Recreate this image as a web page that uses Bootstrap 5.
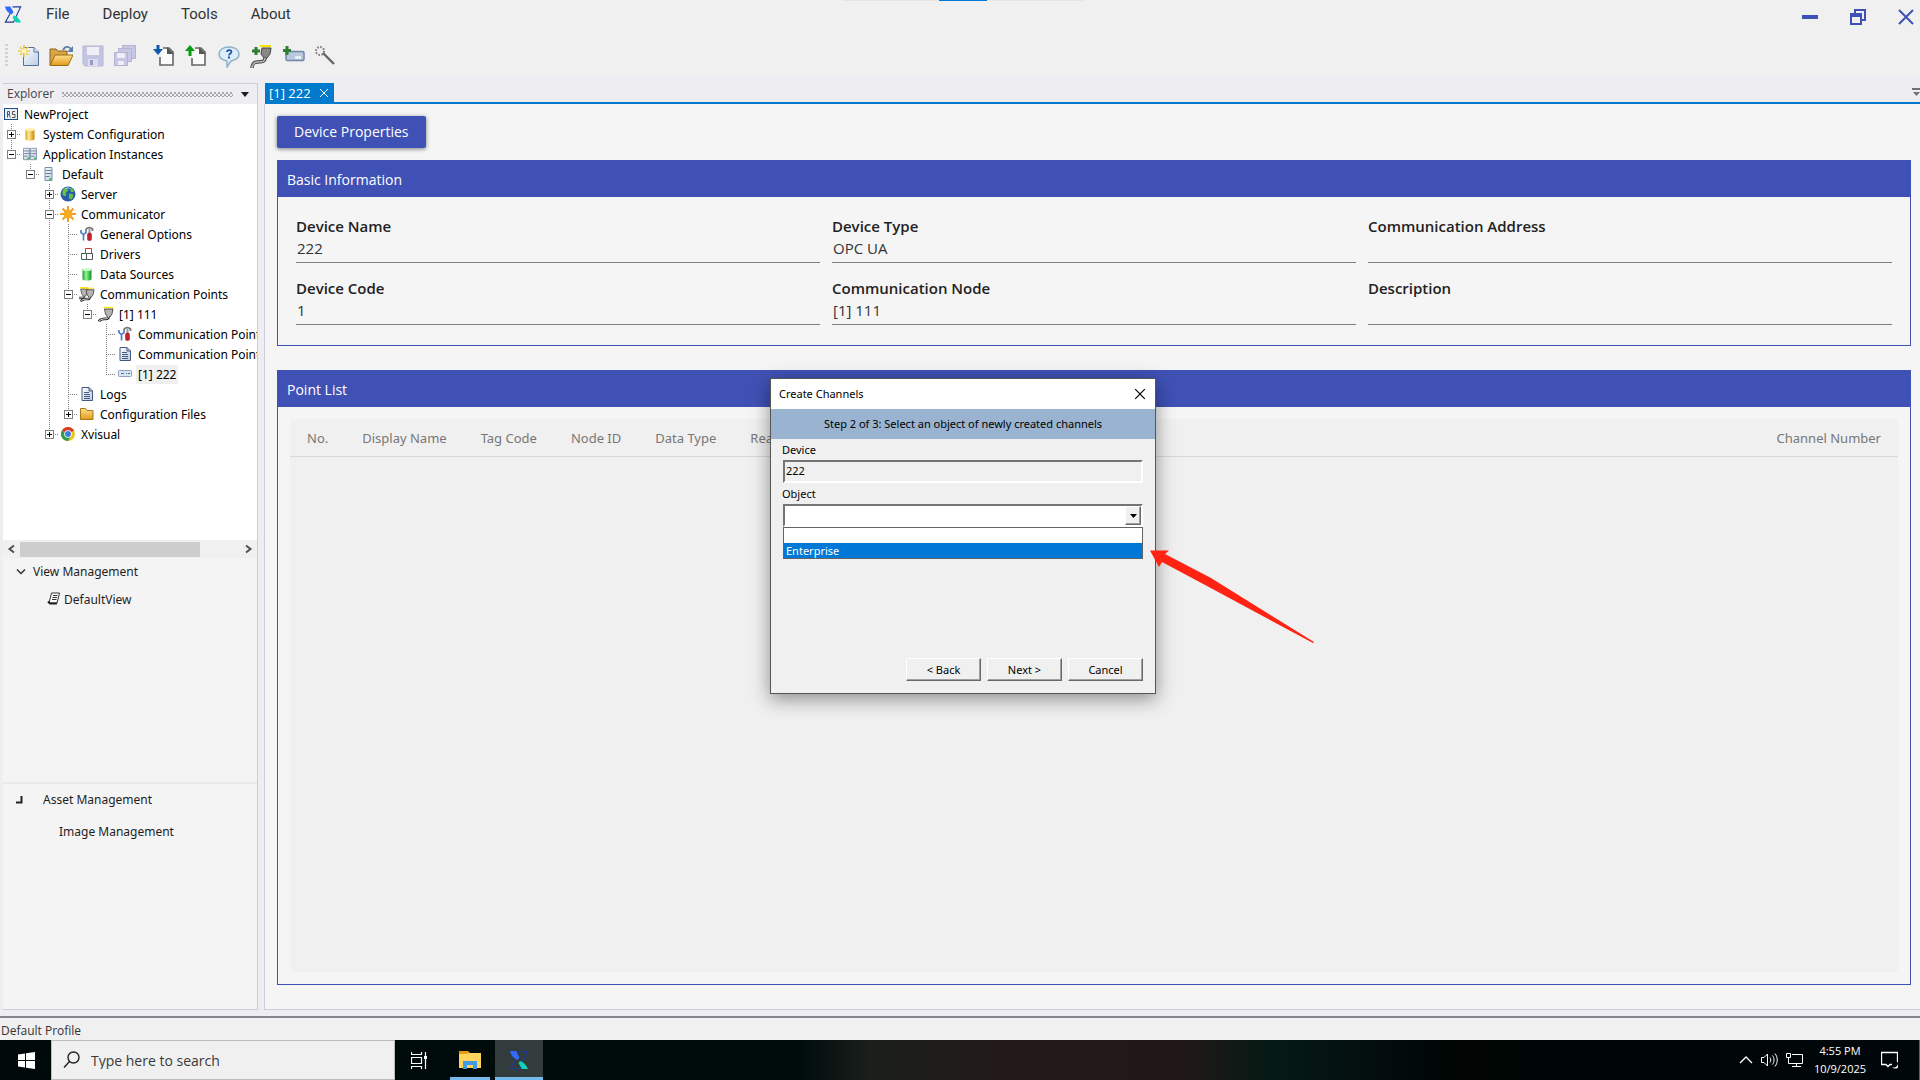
<!DOCTYPE html>
<html lang="en">
<head>
<meta charset="utf-8">
<meta name="viewport" content="width=device-width, initial-scale=1">
<title>NewProject - Explorer</title>
<link href="https://cdn.jsdelivr.net/npm/bootstrap@5.3.0/dist/css/bootstrap.min.css" rel="stylesheet">
<style>
:root{--indigo:#3f51b5;--tab:#007acc;--dock:#eeeef2;--edge:#ccccdd;--ui:"Open Sans","Noto Sans",sans-serif}
body{font-family:var(--ui);font-size:12px;line-height:16px;color:#1e1e1e;background:#f0f0f0}
svg{display:block;flex:none}
button,input,select{font-family:inherit}
.app-shell{min-height:100vh}
.notch{width:241px;height:1px;left:843px;background:linear-gradient(90deg,#e5e5e5 96px,#0078d7 96px,#0078d7 144px,#e5e5e5 144px)}
.menu-bar{height:28px;padding-left:4px}
.menu-bar nav{gap:33px;margin-left:24px}
.menu-bar nav a{font:15px/20px Roboto,sans-serif;color:#333;text-decoration:none}
.caption-btns{gap:32px;padding:6px 6px 0 0}
.plain{background:none;border:0;padding:0;color:inherit}
.tool-bar{height:49px;padding:7px 0 0 5px;gap:8px}
.grip{width:3px;height:24px;margin-right:1px;background:repeating-linear-gradient(180deg,#d0d0d0 0 2px,transparent 2px 4px)}
.dock{background:var(--dock);padding-top:6px;padding-left:3px;gap:6px;min-height:0}
.side{width:255px;border:1px solid var(--edge);border-left:0;background:#f4f4f4;margin-bottom:6px}
.side-head{height:20px;background:var(--dock);padding:0 8px 0 4px;color:#444;gap:8px}
.dots{height:5px;background-image:radial-gradient(circle at 1px 1px,#a5a5ab 0 .7px,transparent 1px),radial-gradient(circle at 1px 1px,#a5a5ab 0 .7px,transparent 1px);background-size:4px 4px;background-position:0 0,2px 2px}
.tree{height:436px;background:#fff;overflow:hidden;font-family:"Noto Sans",sans-serif;color:#000}
.tree-row{display:flex;height:20px;align-items:center;white-space:nowrap}
.tree-row b{width:19px;height:20px;flex:none;position:relative;--d:repeating-linear-gradient(180deg,#808080 0 1px,transparent 1px 2px);--h:repeating-linear-gradient(90deg,#808080 0 1px,transparent 1px 2px);background-repeat:no-repeat}
.tree-row b.v{background-image:var(--d);background-size:1px 20px;background-position:8px 0}
.tree-row b.t{background-image:var(--d),var(--h);background-size:1px 20px,10px 1px;background-position:8px 0,8px 10px}
.tree-row b.l{background-image:var(--d),var(--h);background-size:1px 11px,10px 1px;background-position:8px 0,8px 10px}
.tree-row b.x::before{content:"";position:absolute;left:4px;top:6px;width:9px;height:9px;border:1px solid #808080;background:linear-gradient(#000,#000) 1px 3px/5px 1px no-repeat #fff}
.tree-row b.p::before{background:linear-gradient(#000,#000) 1px 3px/5px 1px no-repeat,linear-gradient(#000,#000) 3px 1px/1px 5px no-repeat,#fff}
.tree-row span{margin-left:3px;padding:0 2px;line-height:19px}
.tree-row .picked{background:#f0f0f0}
.h-scroll{height:18px;background:#f0f0f0}
.h-thumb{width:180px;height:15px;background:#cdcdcd}
.views{height:226px;border-bottom:2px solid #e8e8e8;font-family:"Noto Sans",sans-serif}
.view-root{padding:4px 0 0 13px}
.view-leaf{padding:8px 0 0 44px}
.assets{font-family:"Noto Sans",sans-serif}
.tab-strip{height:21px;border-bottom:2px solid var(--tab);margin-left:1px}
.doc-tab{background:var(--tab);color:#fff;width:69px;padding:0 5px 0 4px;font-size:13px;height:19px}
.doc{background:#f5f5f5;border:1px solid var(--edge);border-top:0;border-right:0;margin-bottom:6px;padding:12px 9px 24px 12px}
.btn-props{background:var(--indigo);color:#fff;font-size:14px;line-height:20px;height:32px;padding:0 17px;border:0;border-radius:2px;box-shadow:0 1px 4px rgba(0,0,0,.5)}
.btn-props:hover{background:#35459c;color:#fff}
.panel{border:1px solid var(--indigo)}
.info-panel{margin:12px 0 24px}
.panel-head{background:var(--indigo);color:#fff;height:36px;padding:0 9px;font-size:14px;line-height:37px;margin:0;font-weight:400}
.info-grid{padding:19px 12px 20px;--bs-gutter-x:12px;row-gap:15px}
.info-grid label{display:block;font-size:15px;line-height:21px;font-weight:600;color:#222}
.info-grid input{display:block;width:100%;border:0;border-bottom:1px solid #808080;background:none;font-size:15px;line-height:20px;height:26px;padding:0 1px 4px;color:#333;border-radius:0;outline:0}
.grid-wrap{background:#f0f0f0;border-radius:4px;margin:12px}
.grid-wrap table{width:100%}
.grid-wrap th{font-family:"Noto Sans",sans-serif;font-size:13px;line-height:20px;font-weight:400;color:#777;padding:9px 17px 8px;border-bottom:1px solid #d8d8d8;white-space:nowrap}
.status{border-top:2px solid #85858b;height:24px;padding-left:1px;line-height:25px;color:#333}
.task-bar{height:40px;color:#fff;border-right:1px solid #5a6262;background:linear-gradient(90deg,#00090a 0,#000c0b 800px,#1b1f1c 870px,#221a19 1000px,#1f1817 1190px,#051a15 1270px,#03110f 1350px,#000504 1450px,#00070a 100%)}
.search{width:344px;background:#f0f0f0;border:1px solid #bbb;padding-left:11px;gap:11px}
.search input{border:0;background:none;outline:0;font-size:14px;color:#333;width:280px;padding:1px 0 0}
.search input::placeholder{color:#3a3a3a;opacity:1}
.start{width:51px;padding-left:2px}
.task{width:48px;height:40px}
.opened{margin:0 1px 0 3px;background:linear-gradient(#76b9ed,#76b9ed) 4px 37px/40px 3px no-repeat}
.running{background:#333c3c;box-shadow:inset 0 -3px #76b9ed}
.clock{font-size:11px;line-height:18px;width:58px;text-align:center}
.tray{padding-right:5px}
.wizard{left:770px;top:378px;width:386px;height:316px;background:#f0f0f0;border:1px solid #555;box-shadow:0 5px 18px rgba(0,0,0,.42);font-family:"Noto Sans",sans-serif;font-size:11px;color:#000}
.wiz-title{height:30px;background:#fff;padding:0 9px 0 8px}
.wiz-step{height:30px;background:#99b3d0;line-height:29px}
.wiz-body{padding:3px 12px 12px}
.wiz-body label{line-height:16px;display:block;margin:0 0 2px -1px}
.wiz-body .next-label{margin-top:3px}
.sunk{display:block;width:100%;height:23px;background:#f0f0f0;border:2px solid;border-color:#757575 #fff #fff #757575;padding:0 2px 3px 1px;border-radius:0;font-size:11px;line-height:16px;outline:0;color:#000}
select.sunk{appearance:none;background:#fff}
.drop{right:2px;top:2px;width:16px;height:19px;background:#f0f0f0;border:1px solid;border-color:#fff #696969 #696969 #fff;box-shadow:inset -1px -1px #a0a0a0;pointer-events:none}
.choices{top:23px;left:0;right:0;border:1px solid #646464;background:#fff;margin:0;padding:0;list-style:none}
.choices li{height:15px;line-height:15px;padding-left:2px}
.choices .on{background:#0078d7;color:#fff}
.wiz-foot{gap:6px}
.btn-raised{width:75px;height:23px;background:#f0f0f0;border:1px solid;border-color:#fff #696969 #696969 #fff;box-shadow:inset -1px -1px #a0a0a0;padding:0;color:#000}
.pointer{left:1148px;top:548px}
</style>
</head>
<body>
<svg width="0" height="0" class="position-absolute" aria-hidden="true">
 <defs>
  <linearGradient id="paper" x1="0" y1="0" x2="1" y2="1"><stop offset="0" stop-color="#fff"/><stop offset="1" stop-color="#b9cce4"/></linearGradient>
  <linearGradient id="gold" x1="0" y1="0" x2="0" y2="1"><stop offset="0" stop-color="#ffe08a"/><stop offset="1" stop-color="#e29a1c"/></linearGradient>
  <linearGradient id="goldh"><stop offset="0" stop-color="#d9a017"/><stop offset=".35" stop-color="#ffe98e"/><stop offset="1" stop-color="#c98a08"/></linearGradient>
  <linearGradient id="greenh"><stop offset="0" stop-color="#1f9a2e"/><stop offset=".4" stop-color="#8dfa92"/><stop offset="1" stop-color="#128a20"/></linearGradient>
  <symbol id="brand" viewBox="0 0 20 20"><path d="M9.500 1.500h9L10.500 18.500H1.500L9 5" fill="none" stroke="#1b3a9a" stroke-width="1.200"/><path d="M1 1h6l3.500 6.500-2 2.500C4 8 2 5 1 1z" fill="#2f6bff"/><path d="M11 11c4 1 6 4 8 8h-6L9.500 13z" fill="#10d3b4"/></symbol>
  <symbol id="page" viewBox="0 0 16 16"><path d="M3 1.500h7l3.500 3.500v9.500H3z" fill="url(#paper)" stroke="#44597c"/><path d="M10 1.500V5h3.500M5 6.500h5M5 8.500h6M5 10.500h6M5 12.500h6" stroke="#44597c" fill="none"/></symbol>
  <symbol id="tower" viewBox="0 0 8 16"><path d="M.5 1.500h7v13h-7z" fill="url(#paper)" stroke="#7d8ea5"/><path d="M1 4.500h6M1 7.500h6M1 10.500h4" stroke="#6b7d95"/><path d="M5 12h2v2H5z" fill="#2ec73a"/></symbol>
  <symbol id="tools" viewBox="0 0 16 16"><path d="M2 4v2.500L4.500 8.500 7 6.500V4M4.500 8v6.500" fill="none" stroke="#4a77c4" stroke-width="1.600"/><path d="M6.500 4c2-3 5-3 7-1v2" fill="none" stroke="#777" stroke-width="1.800"/><path d="M10.500 3v5" stroke="#999" stroke-width="2"/><rect x="8.500" y="7" width="4" height="7.500" rx="1.500" fill="#c5202e" stroke="#8d1420" stroke-width=".5"/></symbol>
  <symbol id="plug" viewBox="0 0 16 16"><path d="M6 1.500h9" stroke="#f4dc00" stroke-width="1.600" stroke-dasharray="1.500 .5"/><path d="M6.500 3h8.500l-1 5-2 3H9.500L7.500 8z" fill="#b5b5b5" stroke="#333" stroke-width=".8"/><path d="M10.500 10.500c0 3.500-3 2-5 2.500S2 13 1 15.500" fill="none" stroke="#222" stroke-width="2.600"/><path d="M10.500 10c0 3.500-3 2.500-5 3S2 13.500 1 15.500" fill="none" stroke="#e4e4e4" stroke-width="1"/></symbol>
  <symbol id="cross" viewBox="0 0 10 10"><path d="M1 1l8 8M9 1l-8 8" stroke="currentColor" stroke-width="1" fill="none"/></symbol>
 </defs>
</svg>

<div class="app-shell d-flex flex-column">
 <header>
  <div class="notch position-absolute"></div>
  <div class="menu-bar d-flex align-items-center">
   <svg width="18" height="19"><use href="#brand"/></svg>
   <nav class="d-flex flex-grow-1"><a href="#">File</a><a href="#">Deploy</a><a href="#">Tools</a><a href="#">About</a></nav>
   <div class="caption-btns d-flex align-items-center">
    <button class="plain" aria-label="Minimize"><svg width="16" height="16"><path d="M0 6h16v4H0z" fill="#3f51b5"/></svg></button>
    <button class="plain" aria-label="Restore"><svg width="16" height="16"><path d="M5 4V1h10v10h-4M1 5h10v10H1z" fill="none" stroke="#3f51b5" stroke-width="2"/><path d="M0 4h12v4H0z" fill="#3f51b5"/></svg></button>
    <button class="plain" aria-label="Close"><svg width="16" height="16"><path d="M1 1l14 14M15 1L1 15" stroke="#3f51b5" stroke-width="2"/></svg></button>
   </div>
  </div>
  <div class="tool-bar d-flex align-items-center" role="toolbar">
   <span class="grip"></span>
   <button class="plain" aria-label="New"><svg width="24" height="24"><path d="M6.500 3.500H17l4.500 4.500v13.500h-15z" fill="url(#paper)" stroke="#58719a"/><path d="M17 3.500V8h4.500" fill="#dfe8f5" stroke="#58719a"/><path d="M7 1v12M1 7h12M3 3l8 8M11 3l-8 8" stroke="#f1c84b" stroke-width="1.600"/><circle cx="7" cy="7" r="2.500" fill="#fff6b8"/></svg></button>
   <button class="plain" aria-label="Open"><svg width="24" height="24"><path d="M1 21V5h6l2 2h9v4" fill="#d9a546" stroke="#8a6420"/><path d="M1 21.500 6 11h18l-5 10.500z" fill="url(#gold)" stroke="#9b6a14"/><path d="M14 6c2-4 6-4 8-1" fill="none" stroke="#5d7ea8" stroke-width="1.800"/><path d="M24 2v6h-6z" fill="#5d7ea8"/></svg></button>
   <button class="plain" aria-label="Save"><svg width="24" height="24"><path d="M2 2h20v20H4l-2-2z" fill="#c3c3e2" stroke="#b5b5d8"/><path d="M6 3h12v8H6z" fill="#efeff8"/><path d="M7 15h10v7H7z" fill="#dcdcf0"/><path d="M9 16h3v5H9z" fill="#9999c7"/></svg></button>
   <button class="plain" aria-label="Save all"><svg width="24" height="24" fill="#c7c7e4" stroke="#b3b3d6"><path d="M9.500 1.500h13v13h-13z"/><path d="M5.500 4.500h13v13h-13z"/><path d="M1.500 8.500h13v13h-13z"/><path d="M4 9h8v5H4zM5 17h6v4H5z" fill="#eeeef8" stroke="none"/></svg></button>
   <button class="plain ms-2" aria-label="Import"><svg width="24" height="24"><path d="M10 4h6l4 4v13H7v-8" fill="#fafafa" stroke="#666" stroke-width="1.600"/><path d="M14 3l7 7h-7z" fill="#555"/><path d="M5 1v7" stroke="#1058a8" stroke-width="3"/><path d="M0 5h10l-5 6z" fill="#1058a8"/></svg></button>
   <button class="plain" aria-label="Export"><svg width="24" height="24"><path d="M10 4h6l4 4v13H7v-7" fill="#fafafa" stroke="#666" stroke-width="1.600"/><path d="M14 3l7 7h-7z" fill="#555"/><path d="M5 5v7" stroke="#0b9a12" stroke-width="3"/><path d="M0 7h10L5 1z" fill="#0b9a12"/></svg></button>
   <button class="plain" aria-label="Help"><svg width="24" height="24"><path d="M12 3c6 0 10 3 10 7s-3 6-8 7l-4 6v-6c-5-1-8-3-8-7s4-7 10-7z" fill="#dceefa" stroke="#8fb2c8" stroke-width="1.500"/><path d="M10 8c0-2.500 4.500-2.500 4.500 0 0 1.500-2.500 1.500-2.500 3.500" fill="none" stroke="#1b4db5" stroke-width="1.600"/><path d="M11 12.500h2v2h-2z" fill="#1b4db5"/></svg></button>
   <button class="plain" aria-label="Add point"><svg width="24" height="24"><path d="M11 2h11" stroke="#f4e400" stroke-width="2"/><path d="M13 4h9l-1 6-3 4h-3l-3-4z" fill="#888" stroke="#444"/><path d="M16 14c0 5-4 3-8 4-3 0-5 3-5 6" fill="none" stroke="#444" stroke-width="3.500"/><path d="M16 14c0 5-4 3-8 4-3 0-5 3-5 6" fill="none" stroke="#bbb" stroke-width="1.500"/><path d="M7 3v8M3 7h8" stroke="#2f7d32" stroke-width="3"/></svg></button>
   <button class="plain" aria-label="Add device"><svg width="24" height="24"><rect x="5" y="7.500" width="18" height="9" rx="1.500" fill="#b9c9e0" stroke="#7086ab" stroke-width="1.500"/><path d="M14 13.500h6" stroke="#fff" stroke-width="2"/><path d="M6 2v9M2 6.500h8" stroke="#2f7d32" stroke-width="3"/></svg></button>
   <button class="plain" aria-label="Wizard"><svg width="24" height="24"><path d="M10 9l11 11" stroke="#666" stroke-width="2.400"/><circle cx="7" cy="7" r="4" fill="none" stroke="#777" stroke-width="2" stroke-dasharray="1.600 1.500"/></svg></button>
  </div>
 </header>

 <div class="dock d-flex flex-grow-1">
  <aside class="side flex-shrink-0">
   <div class="side-head d-flex align-items-center"><span>Explorer</span><span class="dots flex-grow-1"></span><svg width="8" height="5"><path d="M0 0h8L4 5z" fill="#1e1e1e"/></svg></div>
   <div class="tree">
    <div class="tree-row"><svg width="16" height="16" viewBox="0 0 16 16"><rect x="1.500" y="2.500" width="13" height="11" fill="#e8eef5" stroke="#1a4f8a"/><path d="M4.500 11.500v-6h2v3h-2M6 9l1.500 2.500M12 5.500H9.500v3H12v3H9" fill="none" stroke="#555"/></svg><span>NewProject</span></div>
    <div class="tree-row"><b class="t x p"></b><svg width="16" height="16"><path d="M3.500 3h9v10c0 2-9 2-9 0z" fill="url(#goldh)"/><ellipse cx="8" cy="3.500" rx="4.500" ry="1.500" fill="#ffeeb0"/></svg><span>System Configuration</span></div>
    <div class="tree-row"><b class="l x"></b><svg width="16" height="16"><use href="#tower" x="1" y="1" width="7" height="14"/><use href="#tower" x="8" y="1" width="7" height="14"/></svg><span>Application Instances</span></div>
    <div class="tree-row"><b></b><b class="l x"></b><svg width="16" height="16"><use href="#tower" x="3" width="9" height="16"/></svg><span>Default</span></div>
    <div class="tree-row"><b></b><b></b><b class="t x p"></b><svg width="16" height="16"><circle cx="8" cy="8" r="7.500" fill="#2a5da8"/><path d="M3 4c2-3 5-2 5 0s-3 2-2 4-2 3-3 1-1-3 0-5zM9 8c3-1 5 0 4 3s-3 3-4 1zM10 2c2 0 4 2 4 4h-3z" fill="#66c04a"/><path d="M5 3c2-2 4-1 5 0" stroke="#bfe0ff" fill="none"/></svg><span>Server</span></div>
    <div class="tree-row"><b></b><b></b><b class="t x"></b><svg width="16" height="16"><path d="M8 0v16M0 8h16M2.500 2.500l11 11M13.500 2.500l-11 11" stroke="#f0a020" stroke-width="2"/><circle cx="8" cy="8" r="4.500" fill="#f7ab24"/></svg><span>Communicator</span></div>
    <div class="tree-row"><b></b><b></b><b class="v"></b><b class="t"></b><svg width="16" height="16"><use href="#tools"/></svg><span>General Options</span></div>
    <div class="tree-row"><b></b><b></b><b class="v"></b><b class="t"></b><svg width="16" height="16"><path d="M6.500 2.500h6v5h-6z" fill="#fff" stroke="#c33"/><path d="M2.500 7.500h5v6h-5z" fill="#fff" stroke="#2a7a35"/><path d="M7.500 7.500h6v6h-6z" fill="#fff" stroke="#555"/></svg><span>Drivers</span></div>
    <div class="tree-row"><b></b><b></b><b class="v"></b><b class="t"></b><svg width="16" height="16"><path d="M3.500 3h9v10c0 2-9 2-9 0z" fill="url(#greenh)"/><ellipse cx="8" cy="3.500" rx="4.500" ry="1.500" fill="#c8ffc8"/></svg><span>Data Sources</span></div>
    <div class="tree-row"><b></b><b></b><b class="v"></b><b class="t x"></b><svg width="16" height="16"><use href="#plug" x="-4" y="0" width="14" height="15"/><use href="#plug" x="1" y="1" width="15" height="15"/></svg><span>Communication Points</span></div>
    <div class="tree-row"><b></b><b></b><b class="v"></b><b class="v"></b><b class="l x"></b><svg width="16" height="16"><use href="#plug"/></svg><span>[1] 111</span></div>
    <div class="tree-row"><b></b><b></b><b class="v"></b><b class="v"></b><b></b><b class="t"></b><svg width="16" height="16"><use href="#tools"/></svg><span>Communication Point Properties</span></div>
    <div class="tree-row"><b></b><b></b><b class="v"></b><b class="v"></b><b></b><b class="t"></b><svg width="16" height="16"><use href="#page"/></svg><span>Communication Point Log</span></div>
    <div class="tree-row"><b></b><b></b><b class="v"></b><b class="v"></b><b></b><b class="l"></b><svg width="16" height="16"><rect x="1.500" y="4.500" width="13" height="6" rx="1" fill="#dbe4f1" stroke="#8fa1bd"/><path d="M4 7.500h3M9 7.500h1M11 7.500h2" stroke="#4c6fa5"/></svg><span class="picked">[1] 222</span></div>
    <div class="tree-row"><b></b><b></b><b class="v"></b><b class="t"></b><svg width="16" height="16"><use href="#page"/></svg><span>Logs</span></div>
    <div class="tree-row"><b></b><b></b><b class="v"></b><b class="l x p"></b><svg width="16" height="16"><path d="M1.500 13.500v-11h5l1.500 2h6v9z" fill="url(#gold)" stroke="#a87a1b"/></svg><span>Configuration Files</span></div>
    <div class="tree-row"><b></b><b></b><b class="l x p"></b><svg width="16" height="16"><circle cx="8" cy="8" r="7" fill="#f2c218"/><path d="M8 8 1.900 4.500A7 7 0 0 1 14.100 4.500z" fill="#d93a2b"/><path d="M8 8 1.900 4.500A7 7 0 0 0 8 15l3-5z" fill="#2f9d4c"/><circle cx="8" cy="8" r="3.800" fill="#fff"/><circle cx="8" cy="8" r="3" fill="#3f7fe0"/></svg><span>Xvisual</span></div>
   </div>
   <div class="h-scroll d-flex align-items-center">
    <svg width="17" height="10"><path d="M11 1.500 6.500 5l4.500 3.500" fill="none" stroke="#505050" stroke-width="2"/></svg><span class="h-thumb"></span>
    <svg class="ms-auto" width="17" height="10"><path d="M6 1.500 10.500 5 6 8.500" fill="none" stroke="#505050" stroke-width="2"/></svg>
   </div>
   <section class="views">
    <div class="view-root d-flex align-items-center"><svg width="17" height="20"><path d="M1 7.500l4 4 4-4" fill="none" stroke="#333" stroke-width="1.500"/></svg><span>View Management</span></div>
    <div class="view-leaf d-flex align-items-center"><svg width="17" height="20"><path d="M4.500 3h8l-2.500 10H2z" fill="#fff" stroke="#333"/><path d="M6 5.500h4.500M5.500 7.500H10M5 9.500h4.500" stroke="#333"/><path d="M1 11.500l2 2h7" stroke="#222" stroke-width="2" fill="none"/></svg><span>DefaultView</span></div>
   </section>
   <section class="assets">
    <div class="d-flex align-items-center pt-2 ps-2"><svg width="32" height="16"><path d="M5 10.500h5.500V4" fill="none" stroke="#222" stroke-width="2"/></svg><span>Asset Management</span></div>
    <div class="pt-3 ps-5"><div class="ps-2">Image Management</div></div>
   </section>
  </aside>

  <main class="flex-grow-1 d-flex flex-column">
   <div class="tab-strip d-flex justify-content-between">
    <div class="doc-tab d-flex align-items-center justify-content-between"><span>[1] 222</span><button class="plain" aria-label="Close tab"><svg width="10" height="10"><use href="#cross"/></svg></button></div>
    <svg width="8" height="10" class="mt-1"><path d="M0 1h8v2H0zM1 5h7L4.500 9z" fill="#717171"/></svg>
   </div>
   <div class="doc flex-grow-1 d-flex flex-column">
    <div class="d-flex"><button class="btn btn-props">Device Properties</button></div>
    <section class="panel info-panel">
     <h2 class="panel-head">Basic Information</h2>
     <form class="info-grid row mx-0">
      <div class="col-4"><label for="dname">Device Name</label><input id="dname" value="222" readonly></div>
      <div class="col-4"><label for="dtype">Device Type</label><input id="dtype" value="OPC UA" readonly></div>
      <div class="col-4"><label for="caddr">Communication Address</label><input id="caddr" readonly></div>
      <div class="col-4"><label for="dcode">Device Code</label><input id="dcode" value="1" readonly></div>
      <div class="col-4"><label for="cnode">Communication Node</label><input id="cnode" value="[1] 111" readonly></div>
      <div class="col-4"><label for="desc">Description</label><input id="desc" readonly></div>
     </form>
    </section>
    <section class="panel flex-grow-1 d-flex flex-column">
     <h2 class="panel-head">Point List</h2>
     <div class="grid-wrap flex-grow-1">
      <table><thead><tr><th>No.</th><th>Display Name</th><th>Tag Code</th><th>Node ID</th><th>Data Type</th><th class="w-100">Read</th><th>Channel Number</th></tr></thead></table>
     </div>
    </section>
   </div>
  </main>
 </div>

 <footer>
  <div class="status">Default Profile</div>
  <div class="task-bar d-flex">
   <button class="plain start d-flex align-items-center justify-content-center" aria-label="Start"><svg width="17" height="17"><path d="M0 2.500 7 1.500V8H0zM8 1.300 17 0v8H8zM0 9h7v6.500l-7-1zM8 9h9v8l-9-1.300z" fill="#fff"/></svg></button>
   <label class="search d-flex align-items-center"><svg width="17" height="18"><circle cx="10.500" cy="6.500" r="5.500" fill="none" stroke="#222" stroke-width="1.400"/><path d="M6.500 10.500 1 16.500" stroke="#222" stroke-width="1.400"/></svg><input type="text" placeholder="Type here to search" aria-label="Search"></label>
   <button class="plain task d-flex align-items-center justify-content-center" aria-label="Task view"><svg width="17" height="17"><path d="M.500 0v2.500h10V0M.500 17v-2.500h10V17M.500 5.500h10v6H.500zM14.500 0v17" fill="none" stroke="#fff" stroke-width="1.200"/><path d="M13 4h3v3h-3z" fill="#fff"/></svg></button>
   <button class="plain task opened d-flex align-items-center justify-content-center" aria-label="File Explorer"><svg width="22" height="20"><path d="M0 1h9l2 2v3H0z" fill="#e59b10"/><path d="M0 4h8l2-1h12v15H0z" fill="#ffd35c"/><path d="M4 19v-8h14v8h-4v-4H8v4z" fill="#3f9be6"/></svg></button>
   <button class="plain task running d-flex align-items-center justify-content-center" aria-label="Application"><svg width="20" height="22"><use href="#brand"/></svg></button>
   <div class="tray ms-auto d-flex align-items-center gap-2">
    <svg width="14" height="8"><path d="M1 7l6-6 6 6" fill="none" stroke="#fff" stroke-width="1.300"/></svg>
    <svg width="17" height="16"><path d="M.500 5.500H3L6.500 2v12L3 10.500H.500zM9 5.500c1 1.500 1 3.500 0 5M11.500 3.500c2 2.500 2 6.500 0 9M14 1.500c3 4 3 9 0 13" fill="none" stroke="#fff"/></svg>
    <svg width="17" height="16"><path d="M6 2.500h10.500v9H4M10.500 11.500v3M6 14.500h9M.500 1.500h4v4h-4zM2.500 5.500v6h3" fill="none" stroke="#fff"/></svg>
    <div class="clock">4:55 PM<br>10/9/2025</div>
    <svg class="ms-1 me-3" width="17" height="18"><path d="M11 13.500H9l-2 2-2-2H.500V1.500h16V11" fill="none" stroke="#fff" stroke-width="1.300"/><path d="M16 10a4 4 0 1 1-5 6 4 4 0 0 0 5-6z" fill="#fff"/></svg>
   </div>
  </div>
 </footer>
</div>

<div class="wizard position-absolute d-flex flex-column" role="dialog" aria-labelledby="wizt">
 <div class="wiz-title d-flex align-items-center justify-content-between"><span id="wizt">Create Channels</span><button class="plain" aria-label="Close dialog"><svg width="12" height="12"><use href="#cross"/></svg></button></div>
 <div class="wiz-step text-center">Step 2 of 3: Select an object of newly created channels</div>
 <form class="wiz-body flex-grow-1 d-flex flex-column">
  <label for="wdev">Device</label>
  <input class="sunk" id="wdev" value="222" readonly>
  <label for="wobj" class="next-label">Object</label>
  <div class="position-relative">
   <select class="sunk" id="wobj"><option></option><option>Enterprise</option></select>
   <span class="drop position-absolute d-flex align-items-center justify-content-center"><svg width="7" height="4"><path d="M0 0h7L3.500 4z"/></svg></span>
   <ul class="choices position-absolute" role="listbox" aria-label="Object"><li role="option"></li><li class="on" role="option" aria-selected="true">Enterprise</li></ul>
  </div>
  <div class="wiz-foot mt-auto d-flex justify-content-end"><button type="button" class="btn-raised">&lt; Back</button><button type="button" class="btn-raised">Next &gt;</button><button type="button" class="btn-raised">Cancel</button></div>
 </form>
</div>
<svg class="pointer position-absolute" width="168" height="98"><path d="M2 2.500H21L17 6 63 30 166 94 165 95 59 38 14 14 11 19z" fill="#ff2314"/></svg>
<script src="https://cdn.jsdelivr.net/npm/bootstrap@5.3.0/dist/js/bootstrap.bundle.min.js"></script>
</body>
</html>
